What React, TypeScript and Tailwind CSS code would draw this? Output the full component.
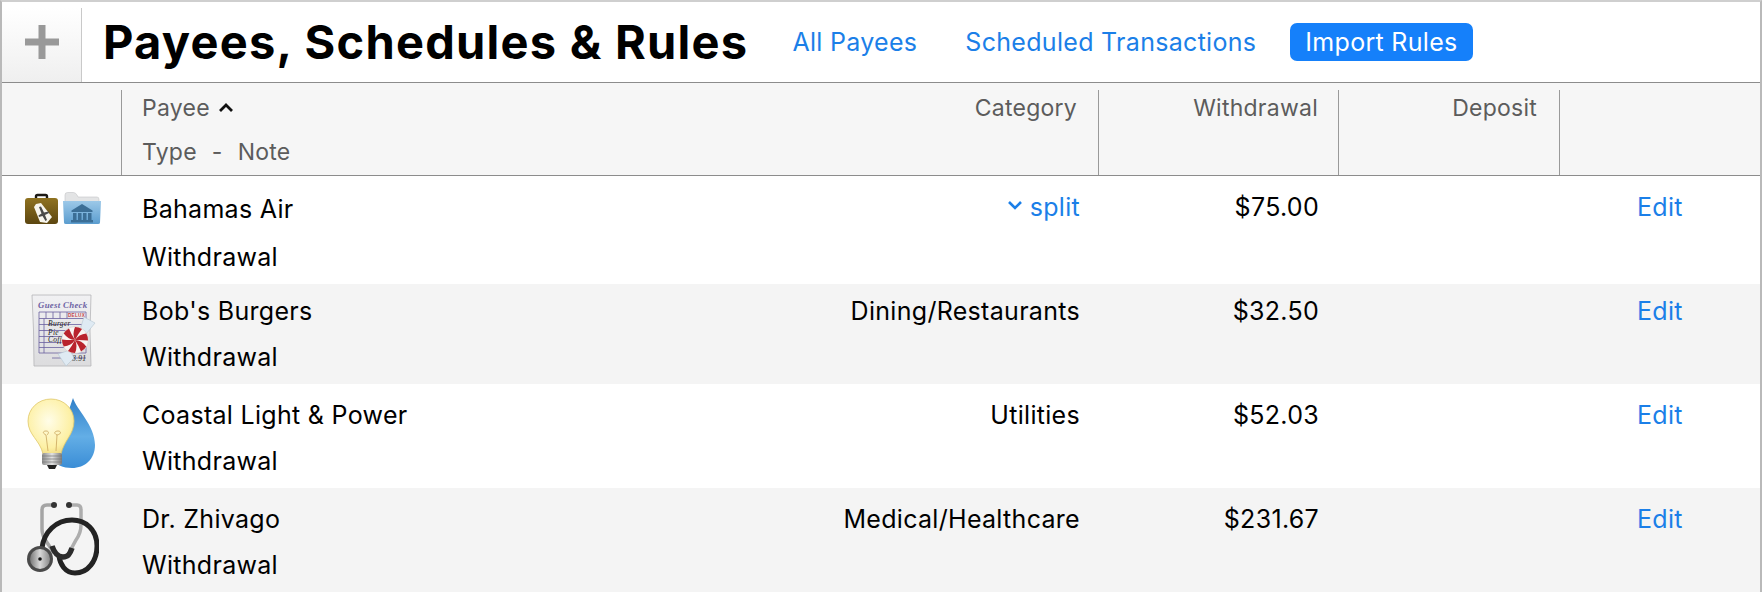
const font = { fontFamily: "Inter, 'Liberation Sans', sans-serif" };

function TripIcon() {
  return (
    <svg width="82" height="40" viewBox="22 18 82 40">
      <defs>
        <linearGradient id="case" x1="0" y1="0" x2="0" y2="1">
          <stop offset="0" stopColor="#8f7220" />
          <stop offset="1" stopColor="#5c4610" />
        </linearGradient>
        <linearGradient id="fold" x1="0" y1="0" x2="0" y2="1">
          <stop offset="0" stopColor="#9cc8e8" />
          <stop offset="1" stopColor="#5b9dcf" />
        </linearGradient>
      </defs>
      <path d="M36 29v-2.500q0-1.500 1.500-1.500h8q1.500 0 1.500 1.500V29" fill="none" stroke="#1c1a16" strokeWidth="2.400" />
      <rect x="25" y="28" width="33" height="26" rx="3" fill="url(#case)" />
      <path d="M34 37l2-3 5-1 11 14-5 6-7-1z" fill="#f7f5ec" />
      <path d="M39 37l2-.5 3 6 4.500-1 .5 1.500-4 2 2 5-1.500 1-3-5-3.500 1-.5-1.500 3-2z" fill="#4a4a48" />
      <path d="M65 32v-7q0-2.500 2.500-2.500h6q2 0 3.500 2.500l1 2h19q2 0 2 2.500V32z" fill="#e3e4e5" stroke="#c2c4c6" strokeWidth=".6" />
      <path d="M63 31h38l-1 21.500q0 1.500-2 1.500H66q-2 0-2-1.500z" fill="url(#fold)" />
      <path d="M82 34l10.500 6.500V42h-21v-1.500z" fill="#3b6e96" />
      <path d="M73 43h3.500v7H73zM78 43h3.500v7H78zM83 43h3.500v7H83zM88 43h3.500v7H88z" fill="#3b6e96" />
      <path d="M71 50h22v2.500H71z" fill="#3b6e96" />
    </svg>
  );
}

function CheckIcon() {
  return (
    <svg width="68" height="80" viewBox="30 12 68 80">
      <defs>
        <linearGradient id="paper" x1="0" y1="0" x2="0" y2="1">
          <stop offset="0" stopColor="#f1f1f3" />
          <stop offset="1" stopColor="#dcdcde" />
        </linearGradient>
      </defs>
      <path d="M32 15h59l-1 36 1 35H34l-.5-36z" fill="url(#paper)" stroke="#b5b5b8" strokeWidth=".8" />
      <text x="38" y="28" fontFamily="'Liberation Serif', serif" fontSize="8.800" fontWeight="700" fontStyle="italic" fill="#6d63a4">Guest Check</text>
      <g fill="none" stroke="#6a5fa0" strokeWidth=".8">
        <path d="M39 32h47v6.500H39zM46 32v6.500M53 32v6.500M60 32v6.500M67 32v6.500" />
        <path d="M39 38.500V73h47V38.500M39 44.500h47M39 50.500h47M39 56.500h47M39 62.500h47M39 67.500h47M44 38.500V73" />
        <path d="M52 78h34" />
      </g>
      <text x="68" y="37.200" fontFamily="'Liberation Sans', sans-serif" fontSize="4.600" fontWeight="700" fill="#c4444a">DELUX</text>
      <g fontFamily="'Liberation Serif', serif" fontStyle="italic" fontSize="7.500" fill="#222">
        <text x="48" y="46">Burger</text>
        <text x="48" y="55">Pie</text>
        <text x="48" y="62">Coffee</text>
        <text x="72" y="81">8.91</text>
      </g>
      <path d="M80 50l4-13 11 6-9 11zM70 70l-12 4 8 12 8-8z" fill="#dfeaf3" stroke="#b6c6d2" strokeWidth=".6" />
      <circle cx="75" cy="60" r="13.500" fill="#f8f4f2" stroke="#c9c3c0" strokeWidth=".5" />
      {[0, 60, 120, 180, 240, 300].map((deg) => (
        <path
          key={deg}
          d="M0 0Q-3-6 0-13A13 13 0 0 1 7-11Q3-6 0 0z"
          fill="#b9232d"
          transform={`translate(75 60) rotate(${deg})`}
        />
      ))}
    </svg>
  );
}

function UtilityIcon() {
  return (
    <svg width="72" height="80" viewBox="26 10 72 80">
      <defs>
        <radialGradient id="glass" cx=".45" cy=".4" r=".7">
          <stop offset="0" stopColor="#fffde8" />
          <stop offset=".7" stopColor="#fdf0a4" />
          <stop offset="1" stopColor="#e8cf72" />
        </radialGradient>
        <linearGradient id="drop" x1="0" y1="0" x2="0" y2="1">
          <stop offset="0" stopColor="#2f7fc8" />
          <stop offset=".55" stopColor="#63aee6" />
          <stop offset="1" stopColor="#3a8dd6" />
        </linearGradient>
        <linearGradient id="metal" x1="0" y1="0" x2="1" y2="0">
          <stop offset="0" stopColor="#8d8d8d" />
          <stop offset=".5" stopColor="#e2e2e2" />
          <stop offset="1" stopColor="#7c7c7c" />
        </linearGradient>
      </defs>
      <path d="M73 13c3 11 22 27 22 47 0 14-10 23-23 23-9 0-16-3-20-9z" fill="url(#drop)" />
      <path d="M51 14c-13 0-23 10-23 22 0 14 12 19 15 33h18c3-14 13-19 13-33 0-12-10-22-23-22z" fill="url(#glass)" stroke="#e0c86c" strokeWidth=".8" />
      <path d="M48 66l-2-16M56 66l1-16M46 50c-4-2-3-4 0-4s3 2 1 4M57 50c-4-2-2-4 1-4s4 3-1 4" fill="none" stroke="#c9a45c" strokeWidth=".8" />
      <rect x="42" y="68" width="20" height="12" rx="2" fill="url(#metal)" />
      <path d="M42 71h20M42 74h20M42 77h20" stroke="#777" strokeWidth=".7" />
      <path d="M47 80h10l-2 4h-6z" fill="#222" />
    </svg>
  );
}

function MedicalIcon() {
  return (
    <svg width="72" height="76" viewBox="27 30 72 76">
      <defs>
        <linearGradient id="steel" x1="0" y1="0" x2="1" y2="0">
          <stop offset="0" stopColor="#777" />
          <stop offset=".5" stopColor="#d8d8d8" />
          <stop offset="1" stopColor="#888" />
        </linearGradient>
      </defs>
      <path d="M53 35h-6q-5 0-5 5v19q0 6 4 12l8 12" fill="none" stroke="#a5a5a5" strokeWidth="3.500" />
      <path d="M70 35h7q4 0 4 5v15q0 8-5 15l-6 11" fill="none" stroke="#adadad" strokeWidth="3.500" />
      <circle cx="54" cy="35" r="3" fill="#333" />
      <circle cx="69" cy="35" r="3" fill="#333" />
      <path d="M42 78c2-16 14-28 30-28 14 0 25 10 25 26 0 15-9 27-22 27-10 0-15-9-16-17" fill="none" stroke="#232323" strokeWidth="5" />
      <path d="M52 76c2 6 6 11 11 11s7-3 9-9" fill="none" stroke="#2c2c2c" strokeWidth="5.500" />
      <circle cx="40" cy="89" r="13" fill="#4a4a4a" />
      <circle cx="40" cy="89" r="10" fill="url(#steel)" />
      <circle cx="40" cy="89" r="1.800" fill="#111" />
    </svg>
  );
}

const rows = [
  { payee: "Bahamas Air", category: "split", amount: "$75.00", icon: <TripIcon />, rowCls: "h-[108px] bg-white", iconCls: "pl-[20px] pt-[12px]", textCls: "pt-[19px] gap-[20px]", valueCls: "pt-[17px]" },
  { payee: "Bob's Burgers", category: "Dining/Restaurants", amount: "$32.50", icon: <CheckIcon />, rowCls: "h-[100px] bg-[#f4f4f4]", iconCls: "pl-[28px] pt-[8px]", textCls: "pt-[13px] gap-[18px]", valueCls: "pt-[13px]" },
  { payee: "Coastal Light & Power", category: "Utilities", amount: "$52.03", icon: <UtilityIcon />, rowCls: "h-[104px] bg-white", iconCls: "pl-[24px] pt-[11px]", textCls: "pt-[17px] gap-[18px]", valueCls: "pt-[17px]" },
  { payee: "Dr. Zhivago", category: "Medical/Healthcare", amount: "$231.67", icon: <MedicalIcon />, rowCls: "h-[104px] bg-[#f4f4f4]", iconCls: "pl-[25px] pt-[12px]", textCls: "pt-[17px] gap-[18px]", valueCls: "pt-[17px]" },
];

export default function App() {
  return (
    <div
      style={font}
      className="w-[1762px] h-[592px] overflow-hidden bg-white border-t-2 border-t-[#cfcfcf] border-x-2 border-x-[#b9b9b9] text-black"
    >
      {/* top bar */}
      <div className="flex h-[81px] items-stretch border-b border-[#8c8c8c]">
        <div className="w-[80px] mt-[6px] flex items-center justify-center bg-gradient-to-b from-white to-[#efefef] border-r border-[#c9c9c9]">
          <svg width="34" height="34" viewBox="0 0 34 34" className="-mt-[6px]">
            <path d="M13.500 0h7v13.500H34v7H20.500V34h-7V20.500H0v-7h13.500z" fill="#999999" />
          </svg>
        </div>
        <h1 className="ml-[21px] self-center text-[47px] leading-[52px] font-bold tracking-[1.25px] whitespace-nowrap">
          Payees, Schedules &amp; Rules
        </h1>
        <div className="flex items-center ml-[44px] text-[25px] tracking-[0.3px] text-[#1b7fe8] whitespace-nowrap">
          <span className="mt-[2px]">All Payees</span>
          <span className="ml-[48px] mt-[2px]">Scheduled Transactions</span>
          <span className="ml-[34px] h-[38px] px-[15px] pt-[2px] flex items-center rounded-[7px] bg-[#1580fa] text-white">
            Import Rules
          </span>
        </div>
      </div>

      {/* column headers */}
      <div className="grid grid-cols-[119px_977px_240px_221px_1fr] h-[93px] pt-[7px] bg-[#f6f6f6] border-b border-[#8c8c8c] text-[23px] tracking-[0.25px] leading-[30px] text-[#5c5c5c]">
        <div />
        <div className="flex justify-between border-l border-[#9a9a9a] pl-[20px] pr-[21px] pt-[3px]">
          <div className="flex flex-col gap-[14px]">
            <div className="flex items-center gap-[8px]">
              Payee
              <svg width="16" height="10" viewBox="0 0 16 10">
                <path d="M2 8l6-6 6 6" fill="none" stroke="#111" strokeWidth="2.800" />
              </svg>
            </div>
            <div className="flex gap-[15px]">
              <span>Type</span>
              <span>-</span>
              <span>Note</span>
            </div>
          </div>
          <div>Category</div>
        </div>
        <div className="border-l border-[#9a9a9a] pr-[20px] pt-[3px] text-right">Withdrawal</div>
        <div className="border-l border-[#9a9a9a] pr-[22px] pt-[3px] text-right">Deposit</div>
        <div className="border-l border-[#9a9a9a]" />
      </div>

      {/* rows */}
      {rows.map((row) => (
        <div key={row.payee} className={`grid grid-cols-[119px_977px_240px_221px_1fr] text-[25px] tracking-[0.3px] leading-[28px] ${row.rowCls}`}>
          <div className={row.iconCls}>{row.icon}</div>
          <div className={`flex flex-col pl-[21px] ${row.textCls}`}>
            <div className="flex items-start justify-between pr-[18px]">
              <span>{row.payee}</span>
              {row.category === "split" ? (
                <span className="flex items-center gap-[7px] -mt-[2px] text-[#1b7fe8]">
                  <svg width="16" height="10" viewBox="0 0 16 10" className="-mt-[4px]">
                    <path d="M2 2l6 6 6-6" fill="none" stroke="#1b7fe8" strokeWidth="2.600" />
                  </svg>
                  split
                </span>
              ) : (
                <span>{row.category}</span>
              )}
            </div>
            <div>Withdrawal</div>
          </div>
          <div className={`text-right pr-[19px] ${row.valueCls}`}>{row.amount}</div>
          <div />
          <div className={`pl-[78px] text-[#1b7fe8] ${row.valueCls}`}>Edit</div>
        </div>
      ))}
    </div>
  );
}
